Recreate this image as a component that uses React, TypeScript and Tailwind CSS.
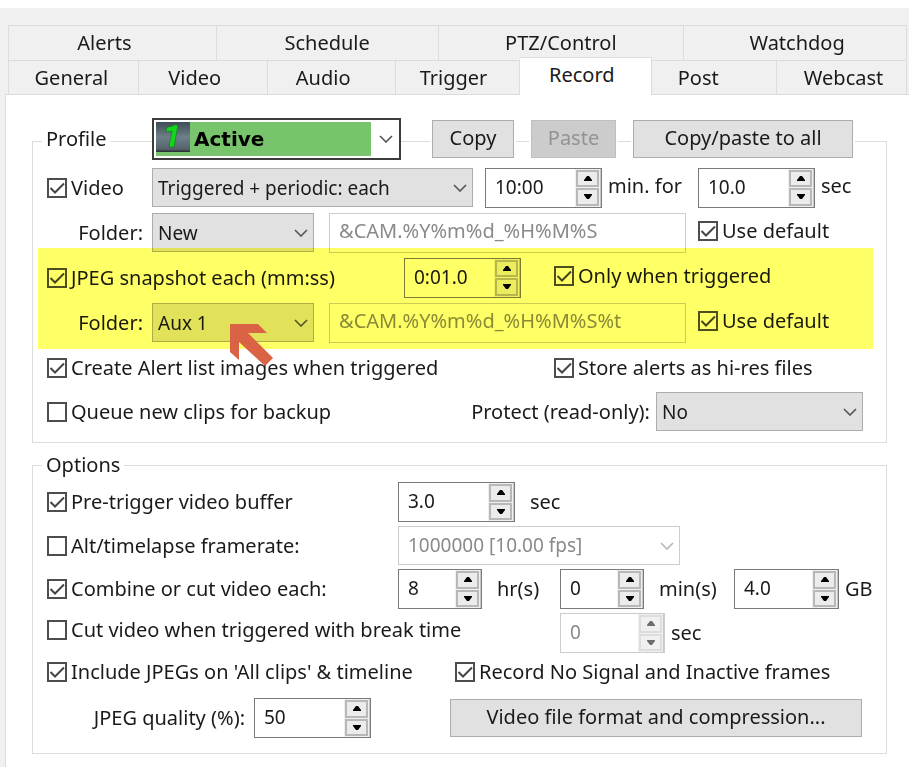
import { useId, type ReactNode } from "react";

const font = "font-['Noto_Sans','Open_Sans',sans-serif]";

function Chevron({ muted = false }: { muted?: boolean }) {
  return (
    <svg
      viewBox="0 0 14 8"
      className={`pointer-events-none absolute right-[6px] top-1/2 h-2 w-[14px] -translate-y-1/2 fill-none ${muted ? "stroke-[#b5b5b5]" : "stroke-[#555555]"}`}
      strokeWidth="1.6"
    >
      <path d="M1 1l6 6 6-6" />
    </svg>
  );
}

function Dropdown({ value, label, className, disabled = false }: { value: string; label: string; className: string; disabled?: boolean }) {
  return (
    <div className={`relative h-[39px] ${className}`}>
      <select
        aria-label={label}
        disabled={disabled}
        className={`h-full w-full appearance-none border text-[19px] opacity-100 ${
          disabled ? "border-[#cccccc] bg-white pb-[2px] pl-[9px] text-[#8a8a8a]" : "border-[#adadad] bg-[#e1e1e1] pl-[5px]"
        }`}
      >
        <option>{value}</option>
      </select>
      <Chevron muted={disabled} />
    </div>
  );
}

function StepButton({ up, label, disabled }: { up: boolean; label: string; disabled: boolean }) {
  return (
    <button
      type="button"
      aria-label={label}
      disabled={disabled}
      className={`flex flex-1 items-center justify-center border-2 ${disabled ? "border-[#dddddd] bg-[#f0f0f0]" : "border-[#b8b8b8] bg-[#ececec]"}`}
    >
      <svg viewBox="0 0 8 5" className={`h-[5px] w-2 ${disabled ? "fill-[#6d6d6d]" : "fill-black"}`}>
        <path d={up ? "M3 0h2l3 4v1H0V4z" : "M0 0h8v1L5 5H3L0 1z"} />
      </svg>
    </button>
  );
}

function Spinner({ value, label, className, disabled = false }: { value: string; label: string; className: string; disabled?: boolean }) {
  return (
    <div className={`flex h-10 shrink-0 border ${disabled ? "border-[#cccccc]" : "border-[#7a7a7a]"} ${className}`}>
      <input
        aria-label={label}
        defaultValue={value}
        disabled={disabled}
        className={`min-w-0 flex-1 bg-white pb-[2px] pl-[9px] text-[19px] ${disabled ? "text-[#8a8a8a]" : ""}`}
      />
      <div className="flex w-[26px] flex-col gap-px border-r border-[#c8c8c8] bg-[#f0f0f0] p-px">
        <StepButton up label={`Increase ${label}`} disabled={disabled} />
        <StepButton up={false} label={`Decrease ${label}`} disabled={disabled} />
      </div>
    </div>
  );
}

function Check({ children, checked = false, className = "" }: { children: ReactNode; checked?: boolean; className?: string }) {
  return (
    <label className={`flex items-center gap-1 whitespace-nowrap ${className}`}>
      <span className="relative size-5 shrink-0">
        <input type="checkbox" defaultChecked={checked} className="peer block size-5 appearance-none border-2 border-[#4d4d4d] bg-white" />
        <svg
          viewBox="0 0 20 20"
          className="pointer-events-none absolute inset-0 size-5 fill-none stroke-[#444444] opacity-0 peer-checked:opacity-100"
          strokeWidth="2"
        >
          <path d="M3.5 10l4.5 4.5L17 5.5" />
        </svg>
      </span>
      {children}
    </label>
  );
}

function FolderRow({ folder, pattern }: { folder: string; pattern: string }) {
  const id = useId();
  return (
    <div className="flex h-[45px] items-center">
      <label htmlFor={id} className="w-[119px] shrink-0 pr-[9px] text-right">
        Folder:
      </label>
      <Dropdown value={folder} label="Folder" className="w-[162px] shrink-0" />
      <input
        id={id}
        disabled
        defaultValue={pattern}
        className="ml-[15px] h-10 min-w-0 flex-1 border border-[#cccccc] bg-white pb-1 pl-[9px] text-[#8a8a8a]"
      />
      <Check checked className="ml-3 w-[188px] shrink-0 pb-1">
        Use default
      </Check>
    </div>
  );
}

const button = "flex h-[38px] items-center justify-center whitespace-nowrap border pb-[2px]";

const upperTabs = [
  { name: "Alerts", pad: "pr-4" },
  { name: "Schedule", pad: "" },
  { name: "PTZ/Control", pad: "" },
  { name: "Watchdog", pad: "pl-1" },
];
const lowerTabs = [
  { name: "General", pad: "pr-1" },
  { name: "Video", pad: "pr-4" },
  { name: "Audio", pad: "pr-4" },
  { name: "Trigger", pad: "pr-2" },
  { name: "Record", pad: "pr-2" },
  { name: "Post", pad: "pr-8" },
  { name: "Webcast", pad: "pl-1" },
];

export default function App() {
  return (
    <div className={`flex min-h-screen flex-col border-t-8 border-white bg-[#f0f0f0] text-[20px] leading-6 text-[#1a1a1a] ${font}`}>
      <nav className="ml-2 mr-[2px] mt-[17px]" role="tablist">
        <div className="grid h-[35px] grid-cols-[208fr_222fr_246fr_223fr] border-l border-t border-[#dcdcdc]">
          {upperTabs.map((t) => (
            <button key={t.name} role="tab" className={`border-r border-[#dcdcdc] ${t.pad}`}>
              {t.name}
            </button>
          ))}
        </div>
        <div className="grid h-[34px] grid-cols-[130fr_129fr_128fr_125fr_132fr_125fr_130fr] border-l border-[#dcdcdc]">
          {lowerTabs.map((t) =>
            t.name === "Record" ? (
              <button
                key={t.name}
                role="tab"
                aria-selected
                className={`z-10 -mb-px -mt-[3px] border-r border-t border-[#dcdcdc] bg-white pb-1 ${t.pad}`}
              >
                {t.name}
              </button>
            ) : (
              <button key={t.name} role="tab" className={`border-r border-t border-[#dcdcdc] ${t.pad}`}>
                {t.name}
              </button>
            ),
          )}
        </div>
      </nav>

      <main className="ml-[5px] flex-1 border-l border-t border-[#dcdcdc] bg-white pb-[11px] pl-[26px] pr-[22px] pt-[46px]">
        <section aria-label="Profile" className="border border-[#dcdcdc] pb-[9px]">
          <div className="-mt-6 flex h-[42px] items-center">
            <div className="w-[119px] shrink-0 pl-[9px]">
              <label htmlFor="profile" className="bg-white px-1">
                Profile
              </label>
            </div>
            <div className="relative h-[42px] flex-1 border-2 border-[#3c3c3c] bg-white py-[2px] pl-[2px] pr-7">
              <select
                id="profile"
                className="h-full w-full appearance-none bg-[#78c46c] pl-[38px] font-['DejaVu_Sans',sans-serif] text-[20px] font-bold text-black"
              >
                <option>Active</option>
              </select>
              <svg viewBox="0 0 34 30" className="pointer-events-none absolute left-[2px] top-[2px] h-[30px] w-[34px]">
                <defs>
                  <linearGradient id="plate" x1="0" y1="0" x2="0" y2="1">
                    <stop offset="0" stopColor="#3d4c55" />
                    <stop offset="0.5" stopColor="#6d7f89" />
                    <stop offset="0.9" stopColor="#55636b" />
                    <stop offset="1" stopColor="#222a2f" />
                  </linearGradient>
                </defs>
                <rect width="34" height="30" fill="url(#plate)" />
                <path d="M11 5q5 0 7-2h4l-4 22h-5l3-16-6 1z" fill="#12d51c" stroke="#0b7a12" strokeWidth="0.6" />
              </svg>
              <Chevron />
            </div>
            <div className="ml-[29px] bg-white px-[2px]">
              <button className={`${button} w-[82px] border-[#adadad] bg-[#e1e1e1]`}>Copy</button>
            </div>
            <div className="ml-[13px] bg-white px-[2px]">
              <button disabled className={`${button} w-[85px] border-[#bfbfbf] bg-[#cccccc] text-[#939393]`}>
                Paste
              </button>
            </div>
            <div className="ml-[13px] mr-[31px] bg-white px-[2px]">
              <button className={`${button} w-[220px] border-[#adadad] bg-[#e1e1e1]`}>Copy/paste to all</button>
            </div>
          </div>

          <div className="mt-[5px] flex h-[45px] items-center">
            <Check checked className="w-[119px] shrink-0 pl-[14px]">
              Video
            </Check>
            <Dropdown value="Triggered + periodic: each" label="Video mode" className="min-w-0 flex-1" />
            <Spinner value="10:00" label="minutes" className="ml-3 w-[117px]" />
            <span className="w-24 shrink-0 whitespace-nowrap pb-1 pl-[6px]">min. for</span>
            <Spinner value="10.0" label="seconds" className="w-[117px]" />
            <span className="w-[71px] shrink-0 pb-1 pl-[6px]">sec</span>
          </div>
          <FolderRow folder="New" pattern="&CAM.%Y%m%d_%H%M%S" />

          <div className="relative">
            <div className="flex h-[45px] items-center">
              <Check checked className="flex-1 pl-[14px]">
                JPEG snapshot each (mm:ss)
              </Check>
              <Spinner value="0:01.0" label="snapshot interval" className="w-[117px]" />
              <Check checked className="ml-[33px] w-[332px] shrink-0 pb-1">
                Only when triggered
              </Check>
            </div>
            <FolderRow folder="Aux 1" pattern="&CAM.%Y%m%d_%H%M%S%t" />
            <div className="pointer-events-none absolute -bottom-1 -top-[7px] left-[5px] right-[13px] bg-[#ffff66] mix-blend-multiply" />
            <svg viewBox="0 0 43 43" className="pointer-events-none absolute left-[197px] top-[69px] size-[43px] fill-[#d96344]">
              <path d="M0 0H28L37 9H18L43 34L35 42L9 18V36L0 28Z" />
            </svg>
          </div>

          <div className="flex h-[45px] items-center">
            <Check checked className="flex-1 pl-[14px]">
              Create Alert list images when triggered
            </Check>
            <Check checked className="w-[332px] shrink-0">
              Store alerts as hi-res files
            </Check>
          </div>
          <div className="flex h-[43px] items-center">
            <Check className="flex-1 pl-[14px]">Queue new clips for backup</Check>
            <span className="pr-[6px]">Protect (read-only):</span>
            <Dropdown value="No" label="Protect (read-only)" className="mr-[23px] w-[207px] shrink-0" />
          </div>
        </section>

        <fieldset className="mt-[10px] border border-[#dcdcdc] pb-[5px]">
          <legend className="ml-[9px] px-1">Options</legend>
          <div className="mt-[3px] flex h-11 items-center">
            <Check checked className="flex-1 pl-[14px]">
              Pre-trigger video buffer
            </Check>
            <div className="flex w-[488px] shrink-0 items-center">
              <Spinner value="3.0" label="buffer seconds" className="w-[117px]" />
              <span className="pl-[15px]">sec</span>
            </div>
          </div>
          <div className="flex h-[43px] items-center">
            <Check className="flex-1 pl-[14px]">Alt/timelapse framerate:</Check>
            <div className="w-[488px] shrink-0">
              <Dropdown value="1000000 [10.00 fps]" label="Framerate" disabled className="w-[282px]" />
            </div>
          </div>
          <div className="flex h-11 items-center">
            <Check checked className="flex-1 pl-[14px]">
              Combine or cut video each:
            </Check>
            <div className="flex w-[488px] shrink-0 items-center">
              <Spinner value="8" label="hours" className="w-[84px]" />
              <span className="w-[78px] pl-[15px]">hr(s)</span>
              <Spinner value="0" label="minutes per clip" className="w-[84px]" />
              <span className="w-[90px] pl-[15px]">min(s)</span>
              <Spinner value="4.0" label="gigabytes" className="w-[105px]" />
              <span className="pl-[6px]">GB</span>
            </div>
          </div>
          <div className="flex h-11 items-center">
            <Check className="flex-1 pb-[6px] pl-[14px]">Cut video when triggered with break time</Check>
            <div className="flex w-[326px] shrink-0 items-center">
              <Spinner value="0" label="break seconds" disabled className="w-[105px]" />
              <span className="pl-[6px]">sec</span>
            </div>
          </div>
          <div className="flex h-[33px] items-center">
            <Check checked className="flex-1 pl-[14px]">
              Include JPEGs on 'All clips' &amp; timeline
            </Check>
            <Check checked className="w-[431px] shrink-0">
              Record No Signal and Inactive frames
            </Check>
          </div>
          <div className="flex h-[60px] items-center">
            <span className="w-[221px] shrink-0 pr-[9px] text-right">JPEG quality (%):</span>
            <Spinner value="50" label="JPEG quality" className="w-[117px]" />
            <button className={`${button} ml-auto mr-6 w-[412px] border-[#adadad] bg-[#e1e1e1]`}>Video file format and compression...</button>
          </div>
        </fieldset>
      </main>
    </div>
  );
}
